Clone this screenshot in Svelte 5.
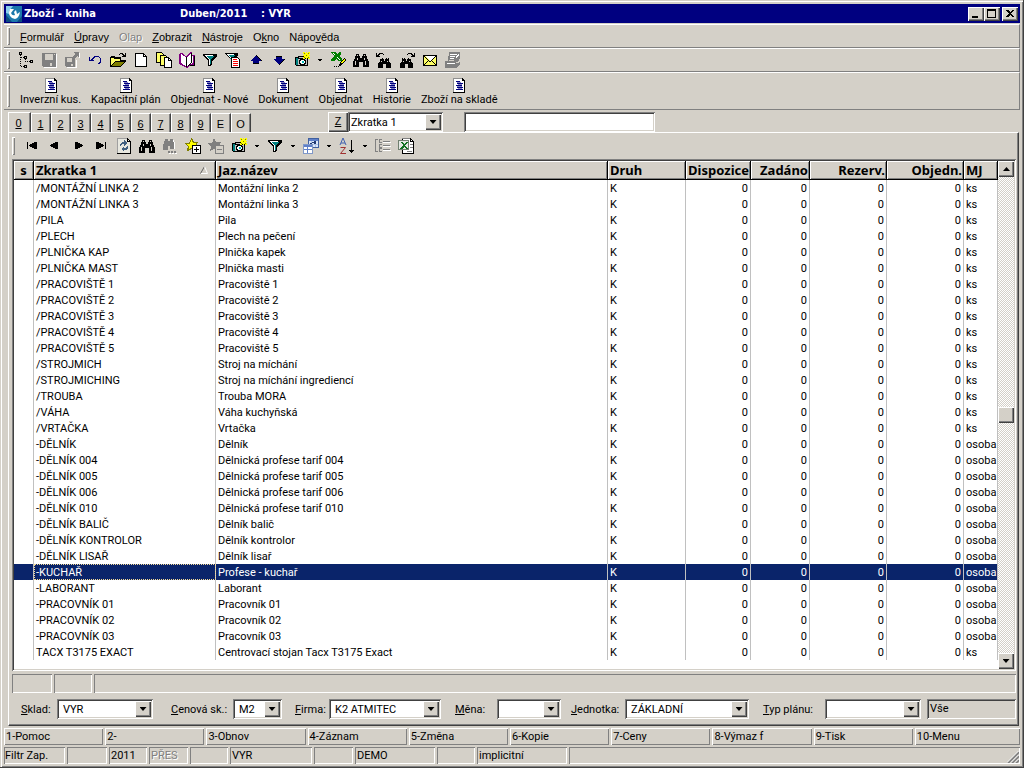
<script>
  const menu = [
    ["", "F", "ormulář"], ["", "Ú", "pravy"], ["Olap", "", ""], ["", "Z", "obrazit"],
    ["", "N", "ástroje"], ["O", "k", "no"], ["Nápo", "v", "ěda"],
  ];

  const mainTools = [
    "tree", "save", "saveAs", "undo", "open", "page", "copies", "book", "funnel", "funnelDoc",
    "up", "down", "camera", "caret", "sheet", "bino", "binoLeft", "binoRight", "mail", "note",
  ];

  const gridTools = [
    "first", "prev", "next", "last", "refresh", "bino", "binoOff", "starAdd", "starOff", "camera",
    "caret", "funnel", "caret", "tables", "caret", "sort", "caret", "listOff", "excel",
  ];

  const forms = ["Inverzní kus.", "Kapacitní plán", "Objednat - Nové", "Dokument", "Objednat", "Historie", "Zboží na skladě"];
  const tabs = ["0", "1", "2", "3", "4", "5", "6", "7", "8", "9", "E", "O"];

  let activeTab = $state("0");
  let selected = $state(24);

  const rows = [
    ["/MONTÁŽNÍ LINKA 2", "Montážní linka 2", "ks"],
    ["/MONTÁŽNÍ LINKA 3", "Montážní linka 3", "ks"],
    ["/PILA", "Pila", "ks"],
    ["/PLECH", "Plech na pečení", "ks"],
    ["/PLNIČKA KAP", "Plnička kapek", "ks"],
    ["/PLNIČKA MAST", "Plnička masti", "ks"],
    ["/PRACOVIŠTĚ 1", "Pracoviště 1", "ks"],
    ["/PRACOVIŠTĚ 2", "Pracoviště 2", "ks"],
    ["/PRACOVIŠTĚ 3", "Pracoviště 3", "ks"],
    ["/PRACOVIŠTĚ 4", "Pracoviště 4", "ks"],
    ["/PRACOVIŠTĚ 5", "Pracoviště 5", "ks"],
    ["/STROJMICH", "Stroj na míchání", "ks"],
    ["/STROJMICHING", "Stroj na míchání ingrediencí", "ks"],
    ["/TROUBA", "Trouba MORA", "ks"],
    ["/VÁHA", "Váha kuchyňská", "ks"],
    ["/VRTAČKA", "Vrtačka", "ks"],
    ["-DĚLNÍK", "Dělník", "osoba"],
    ["-DĚLNÍK 004", "Dělnická profese tarif 004", "osoba"],
    ["-DĚLNÍK 005", "Dělnická profese tarif 005", "osoba"],
    ["-DĚLNÍK 006", "Dělnická profese tarif 006", "osoba"],
    ["-DĚLNÍK 010", "Dělnická profese tarif 010", "osoba"],
    ["-DĚLNÍK BALIČ", "Dělník balič", "osoba"],
    ["-DĚLNÍK KONTROLOR", "Dělník kontrolor", "osoba"],
    ["-DĚLNÍK LISAŘ", "Dělník lisař", "osoba"],
    ["-KUCHAŘ", "Profese - kuchař", "osoba"],
    ["-LABORANT", "Laborant", "osoba"],
    ["-PRACOVNÍK 01", "Pracovník 01", "osoba"],
    ["-PRACOVNÍK 02", "Pracovník 02", "osoba"],
    ["-PRACOVNÍK 03", "Pracovník 03", "osoba"],
    ["TACX T3175 EXACT", "Centrovací stojan Tacx T3175 Exact", "ks"],
  ];

  // lead = space before the label, cap = label width, box = drop-down width
  const filters = [
    { id: "sklad", key: "S", rest: "klad:", value: "VYR", lead: 0, cap: 36, box: 96 },
    { id: "cena", key: "C", rest: "enová sk.:", value: "M2", lead: 18, cap: 62, box: 49 },
    { id: "firma", key: "F", rest: "irma:", value: "K2 ATMITEC", lead: 13, cap: 34, box: 112 },
    { id: "mena", key: "M", rest: "ěna:", value: "", lead: 14, cap: 42, box: 64 },
    { id: "jednotka", key: "J", rest: "ednotka:", value: "ZÁKLADNÍ", lead: 10, cap: 54, box: 124 },
    { id: "plan", key: "T", rest: "yp plánu:", value: "", lead: 14, cap: 62, box: 96 },
  ];

  const keys = ["1-Pomoc", "2-", "3-Obnov", "4-Záznam", "5-Změna", "6-Kopie", "7-Ceny", "8-Výmaz f", "9-Tisk", "10-Menu"];
  const status = ["Filtr Zap.", "", "2011", "PŘES", "", "VYR", "", "DEMO", "", "implicitní", ""];
</script>

{#snippet binoShape()}
  <path d="M3 2h3v2h1v2h2v-2h1v-2h3v2h1v3h1v2h1v6h-6v-5h-4v5h-6v-6h1v-2h1v-3h1z" />
  <path fill="#d4d0c8" d="M4 3h1v1h-1zM11 3h1v1h-1zM4 6h1v2h-1zM11 6h1v2h-1zM2 9h1v4h-1zM12 9h1v4h-1z" />
{/snippet}

{#snippet icon(name)}
  <svg class="icon" viewBox="0 0 16 16" width="16" height="16" shape-rendering="crispEdges" aria-hidden="true">
    {#if name === "tree"}
      <path fill="none" stroke="#000" d="M1.500 .5h2v2h-2zM6.500 4.500h2v2h-2zM12.500 8.500h2v2h-2zM6.500 13.500h2v2h-2z" />
      <path fill="none" stroke="#000" stroke-dasharray="1 1" d="M2.500 3v12M3 5.500h3M3 14.500h3M7.500 7v3M7 9.500h5" />
    {:else if name === "save"}
      <path fill="#808080" d="M1 1h14v14h-13l-1-1z" />
      <path fill="#d4d0c8" d="M4 2h8v6h-8zM9 11h2v3h-2zM13 2h1v1h-1z" />
      <path fill="#fff" d="M15 2h1v14h-13v-1h12z" />
    {:else if name === "saveAs"}
      <path fill="#808080" d="M1 5h10v10h-9l-1-1zM10 0h5v5h-1l-1-1-3 3-2-2 3-3z" />
      <path fill="#d4d0c8" d="M3 6h5v4h-5zM7 12h2v2h-2z" />
      <path fill="#fff" d="M12 8h1v8h-10v-1h9zM15 1h1v5h-1z" />
    {:else if name === "undo"}
      <path fill="#000080" d="M2 5h1v3l1-1 1-1 1-1 1-1h4l2 1 1 2v3l-2 2h-1v-1l2-2v-2l-1-1-1-1h-3l-3 3h2v1h-5v-5z" />
    {:else if name === "open"}
      <path fill="#000" d="M0 5h1v-1h4v1h6v3h5v1l-5 6h-11z" />
      <path fill="#ffff66" d="M1 6h3v1h6v2h-5l-4 4z" />
      <path fill="#808000" d="M5 10h9l-4 4h-9z" />
      <path fill="#000" d="M9 2h1v-1h3v1h1v1h1v-2h1v4h-4v-1h1v-1h-1v-1h-2v1h-1z" />
    {:else if name === "page"}
      <path fill="#fff" stroke="#000" d="M2.500 1.500h8l3 3v10h-11z" />
      <path fill="none" stroke="#000" d="M10.500 1.500v3h3" />
    {:else if name === "copies"}
      <path fill="#ffff66" stroke="#000" d="M.5 .5h5l2 2v8h-7z" />
      <path fill="#ffff66" stroke="#000" d="M4.500 3.500h5l2 2v8h-7z" />
      <path fill="#fff" stroke="#000" d="M8.500 5.500h4l3 3v7h-7z" />
      <path fill="none" stroke="#000" d="M12.500 5.500v3h3" />
    {:else if name === "book"}
      <path fill="#800080" d="M0 2h1v-1h2l4 3 5-4h1v3h3v11h-6l-1 2h-2l-1-1-6-3z" />
      <path fill="#fff" d="M2 2l5 3v9l-5-3zM8 5l4-4v9l-4 4zM13 4h1v7l-4 2 3-3z" />
      <path fill="#000" d="M7 5h1v10h-1zM12 1h1v10l-4 3v-1l3-3zM15 4h1v10h-5v-1h4z" />
    {:else if name === "funnel"}
      <path fill="#000" d="M1 2h14v2l-5 5v4l-2 1h-2v-5l-5-5z" />
      <path fill="#008080" d="M4 4h8l-3 4v4h-1v-4z" />
      <path fill="#fff" d="M3 3h8v1h-6l3 4v5h-1v-5l-4-4z" />
    {:else if name === "funnelDoc"}
      <path fill="#000" d="M0 1h13v2l-4 4v4h-3v-4l-6-5z" />
      <path fill="#008080" d="M3 3h7l-3 4v2z" />
      <path fill="#fff" d="M2 2h7v1h-5l3 4v3h-1v-3z" />
      <path fill="#fff" stroke="#000" d="M6.500 5.500h6l2 2v8h-8z" />
      <path fill="#f00" d="M8 7h4v1h-4zM8 9h5v1h-5zM8 11h5v1h-5zM8 13h5v1h-5z" />
    {:else if name === "up"}
      <path fill="#000080" d="M8 3l6 6h-3v3h-6v-3h-3z" /><path fill="#000" d="M5 11h6v1h-6zM8 3l6 6h-1l-5-5z" />
    {:else if name === "down"}
      <path fill="#000080" d="M8 13l-6-6h3v-3h6v3h3z" /><path fill="#000" d="M5 4h6v1h-6zM8 13l6-6h-1l-5 5z" />
    {:else if name === "camera"}
      <path fill="#000" d="M1 5h3v-1h8v1h2v9h-12l-1-1z" />
      <path fill="#008080" d="M2 6h2v7h-2z" />
      <path fill="#c0c0c0" d="M5 5h6v1h-6zM4 7h9v6h-9z" />
      <path fill="#000" d="M6 7h5v1h1v4h-1v1h-5v-1h-1v-4h1z" />
      <path fill="#fff" d="M7 8h3v1h1v2h-1v1h-3v-1h-1v-2h1z" />
      <path fill="#00c0c0" d="M8 9h2v2h-2z" />
      <path fill="#ffff00" d="M9 0h2v1h1v-1h1v1h1v-1h2v2h-1v1h1v1h-1v1h1v2h-2v-1h-1v1h-1v-1h-1v1h-2v-2h1v-1h-1v-1h1v-1h-1z" />
      <path fill="#808000" d="M12 3h1v1h-1zM10 1h1v1h-1zM14 1h1v1h-1zM10 5h1v1h-1zM14 5h1v1h-1z" />
    {:else if name === "caret"}
      <path fill="#000" d="M6 7h5v1h-1v1h-1v1h-1v-1h-1v-1h-1z" />
    {:else if name === "sheet"}
      <path fill="#008000" d="M0 0h5l2 2 2-2h2v2l-2 2 3 3v2h-4l-2-2-2 2h-3v-2l3-3-3-3z" />
      <path fill="#fff" d="M2 1h1l2 2v1zM7 5l3 3h-1l-3-3z" />
      <path fill="#000" d="M4 14h1v1h-1zM6 14h1v1h-1zM8 14h1v1h-1zM10 11l4-5 2 2-4 5-3 1z" />
      <path fill="#ffff00" d="M11 11l3-4 1 1-3 4z" />
    {:else if name === "bino"}
      {@render binoShape()}
    {:else if name === "binoLeft" || name === "binoRight"}
      <g transform={name === "binoLeft" ? "translate(16 0) scale(-1 1)" : ""}>
        <g transform="translate(1 4) scale(.8 .8)">{@render binoShape()}</g>
        <path fill="#000" d="M8 2h1v-1h4v1h1v1h1v-2h1v4h-4v-1h1v-1h-1v-1h-3v1h-1z" />
      </g>
    {:else if name === "binoOff"}
      <path fill="#808080" d="M3 1h3v2h2v-2h3v3h1v7h-4v-3h-2v4h-5v-6h1v-3h1z" />
      <path fill="#fff" d="M11 2h1v2h1v7h-1v-7h-1z" />
      <path fill="#808080" d="M6 13h2v2h-2zM9 13h2v2h-2zM12 13h2v2h-2z" />
      <path fill="#fff" d="M7 15h2v1h-2zM10 15h2v1h-2zM13 15h2v1h-2z" />
    {:else if name === "mail"}
      <path fill="#ffff66" stroke="#000" d="M1.500 3.500h13v10h-13z" />
      <path fill="#fff" d="M3 4h10l-5 5z" />
      <path fill="none" stroke="#000" d="M2 4l6 6 6-6M2 13l4-4M14 13l-4-4" />
    {:else if name === "note"}
      <path fill="#808080" d="M4 0h11v6l-2 4h2v3l-4 3h-11v-7h3z" />
      <path fill="#fff" d="M5 2h7v1h-7zM5 4h5v1h-5zM5 6h4v1h-4zM2 11h8v1h-8zM11 5l2-3 1 1-3 4z" />
      <path fill="#d4d0c8" d="M4 8h5v1h-5zM11 10h3v1h-3z" />
    {:else if name === "first"}
      <path fill="#000" d="M3 4h1v7h-1zM13 4v7h-2l-6-3v-1l6-3z" />
    {:else if name === "prev"}
      <path fill="#000" d="M11 4v7h-2l-6-3v-1l6-3z" />
    {:else if name === "next"}
      <path fill="#000" d="M5 4v7h2l6-3v-1l-6-3z" />
    {:else if name === "last"}
      <path fill="#000" d="M12 4h1v7h-1zM3 4v7h2l6-3v-1l-6-3z" />
    {:else if name === "refresh"}
      <path fill="#e8e8e0" stroke="#000" d="M1.500 .5h10l3 3v12h-13z" />
      <path fill="#a0a0a0" d="M1 0h10v1h-10zM1 1h1v14h-1z" />
      <path fill="none" stroke="#000" d="M11.500 1v2.500h3" />
      <path fill="#406080" d="M4 8v-2l2-2h2v-2l3 3-3 3v-2h-2l-1 2zM12 8v2l-2 2h-2v2l-3-3 3-3v2h2l1-2z" />
    {:else if name === "starAdd"}
      <path fill="#ffff00" stroke="#808000" d="M6.500 .5l2 4h4l-2 3 1 5-5-2-4 2 1-4-3-3h4z" />
      <path fill="#fff" stroke="#000" d="M7.500 7.500h8v8h-8z" />
      <path stroke="#000" d="M9 11.500h5M11.500 9v5" />
    {:else if name === "starOff"}
      <path fill="#808080" d="M6 0l2 4h5l-2 4v5l-5-2-4 2 1-4-3-4h4z" />
      <path fill="#d4d0c8" stroke="#808080" d="M7.500 7.500h8v8h-8z" />
      <path stroke="#808080" d="M9 11.500h5" />
    {:else if name === "tables"}
      <path fill="#dce8fa" stroke="#4060a0" d="M5.500 .5h10v9h-10z" />
      <path fill="#6080c8" d="M6 1h9v2h-9z" />
      <path fill="#b0c4e8" d="M8 3h1v6h-1zM12 3h1v6h-1zM6 6h9v1h-9z" />
      <path fill="#fff" stroke="#8098c8" d="M.5 6.500h9v9h-9z" />
      <path fill="#6080c8" d="M1 7h8v2h-8zM4 9h1v6h-1zM1 11h8v1h-8z" />
      <path fill="#203870" d="M6 5h3v-1h2v-1h2v3h-2v-1h-2v1h-2z" />
    {:else if name === "sort"}
      <path fill="none" stroke="#4060b0" shape-rendering="auto" d="M1 7l3-7 3 7M2 5h4" />
      <path fill="none" stroke="#a03030" shape-rendering="auto" d="M1.500 9.500h5l-5 6h5.500" />
      <path fill="#000" d="M12 2h1v10h2l-2 3h-1l-2-3h2z" />
    {:else if name === "listOff"}
      <path fill="none" stroke="#808080" d="M3 1.500h-2.500v12h2.500M6.500 1.500h-2v3h2M6.500 6.500h-2v3h2M6.500 10.500h-2v3h2M8 3.500h7M8 7.500h7M8 11.500h7" />
      <path stroke="#fff" d="M8 4.500h8M8 8.500h8M8 12.500h8" />
    {:else if name === "excel"}
      <path fill="#fff" stroke="#000" d="M4.500 .5h8l3 3v12h-11z" />
      <path fill="#808080" d="M4 0h8v1h-8z" />
      <path fill="none" stroke="#000" d="M12.500 1v2.500h3" />
      <path fill="#e4e8e4" stroke="#708070" d="M.5 2.500h10v9h-10z" />
      <path fill="#107020" d="M2 4h2l2 2 2-2h2l-3 3 3 4h-2l-2-2-2 2h-2l3-4z" />
      <path stroke="#808080" d="M9 13.500h5M12 9.500h3M12 6.500h3" />
    {:else if name === "form"}
      <path fill="#fff" d="M2 1h9l3 3v11h-12z" />
      <path fill="none" stroke="#909090" d="M2.500 15v-13.500h9" />
      <path fill="#000" d="M13 4h1v12h-12v-1h11zM11 1h1v1h1v1h1v1h-3z" />
      <path fill="#000080" d="M5 4h4v1h-4zM6 6h6v1h-6zM5 8h6v1h-6zM6 10h6v1h-6zM5 12h7v1h-7z" />
      <path fill="#8080c0" d="M6 5h4v1h-4zM7 7h4v1h-4zM6 9h5v1h-5zM7 11h4v1h-4z" />
    {/if}
  </svg>
{/snippet}

<div class="window">
  <header class="title-bar">
    <svg class="logo" viewBox="0 0 16 16" width="16" height="16" aria-hidden="true">
      <rect width="16" height="16" fill="#1c78ac" />
      <path fill="#0c4c80" d="M0 9l6 7h-6zM11 16l5-6v6z" />
      <path fill="#8cd0ec" d="M0 0h7L3 5v3L0 7z" />
      <path fill="#fff" d="M4 3Q2 7 4 10Q6 13 9 13Q13 12 14 6L11 8L10 4L8 6L9 9Q6 10 5 7L8 3L6 3Z" />
    </svg>
    <h1>Zboží - kniha</h1>
    <span class="period">Duben/2011</span>
    <span class="book">: VYR</span>
    <div class="window-buttons">
      <button aria-label="Minimalizovat">
        <svg viewBox="0 0 12 10" width="12" height="10"><path fill="#000" d="M2 7h6v2h-6z" /></svg>
      </button>
      <button aria-label="Maximalizovat">
        <svg viewBox="0 0 12 10" width="12" height="10"><path fill="#000" d="M1 0h9v9h-9zM2 2v6h7v-6z" fill-rule="evenodd" /></svg>
      </button>
      <button class="close" aria-label="Zavřít">
        <svg viewBox="0 0 12 10" width="12" height="10" shape-rendering="crispEdges"><path fill="#000" d="M2 1h2l2 2 2-2h2l-3 3.500 3 3.500h-2l-2-2-2 2h-2l3-3.500z" /></svg>
      </button>
    </div>
  </header>

  <nav class="band menu">
    <span class="grip"></span>
    {#each menu as [before, key, after]}
      <button disabled={!key}>{before}<u>{key}</u>{after}</button>
    {/each}
  </nav>

  <div class="band tools">
    <span class="grip"></span>
    {#each mainTools as name}
      <button class:narrow={name === "caret"} aria-label={name}>{@render icon(name)}</button>
    {/each}
  </div>

  <div class="band forms">
    <span class="grip"></span>
    {#each forms as name}
      <button>{@render icon("form")}{name}</button>
    {/each}
  </div>

  <main>
    <div class="tab-row">
      {#each tabs as tab}
        <button class="tab" class:active={tab === activeTab} onclick={() => (activeTab = tab)}>
          {#if tab === "E" || tab === "O"}{tab}{:else}<u>{tab}</u>{/if}
        </button>
      {/each}
      <button class="order"><u>Z</u></button>
      <span class="combo order-by">
        <select aria-label="Řazení"><option>Zkratka 1</option></select>
        <span class="drop"></span>
      </span>
      <input class="search" type="text" aria-label="Hledat" />
    </div>

    <section class="page">
      <div class="tools">
        <span class="grip"></span>
        {#each gridTools as name}
          <button class:narrow={name === "caret"} aria-label={name}>{@render icon(name)}</button>
        {/each}
      </div>

      <div class="grid">
        <table>
          <colgroup>
            <col class="c-mark" /><col class="c-code" /><col /><col class="c-kind" /><col class="c-disp" />
            <col class="c-zad" /><col class="c-rez" /><col class="c-obj" /><col class="c-unit" />
          </colgroup>
          <thead>
            <tr>
              <th class="mark">s</th>
              <th>
                <span class="sorted">Zkratka 1
                  <svg viewBox="0 0 8 8" width="8" height="8"><path fill="none" stroke="#606060" d="M.5 7.500L4.500 .5" /><path fill="none" stroke="#fff" d="M4.500 .5L7.500 7.500H1" /></svg>
                </span>
              </th>
              <th>Jaz.název</th>
              <th>Druh</th>
              <th class="num">Dispozice</th>
              <th class="num">Zadáno</th>
              <th class="num">Rezerv.</th>
              <th class="num">Objedn.</th>
              <th>MJ</th>
            </tr>
          </thead>
          <tbody>
            {#each rows as [code, title, unit], i}
              <tr class:selected={i === selected} onclick={() => (selected = i)}>
                <td></td>
                <td class="code">{code}</td>
                <td>{title}</td>
                <td>K</td>
                <td class="num">0</td>
                <td class="num">0</td>
                <td class="num">0</td>
                <td class="num">0</td>
                <td>{unit}</td>
              </tr>
            {/each}
          </tbody>
        </table>
        <div class="scrollbar">
          <button class="arrow up" aria-label="Nahoru"></button>
          <span class="thumb"></span>
          <button class="arrow" aria-label="Dolů"></button>
        </div>
      </div>

      <div class="totals"><span></span><span></span><span></span></div>

      <div class="filters">
        {#each filters as f}
          <label for={f.id} style="margin-left: {f.lead}px; width: {f.cap}px"><u>{f.key}</u>{f.rest}</label>
          <span class="combo" style="width: {f.box}px">
            <select id={f.id}><option>{f.value}</option></select>
            <span class="drop"></span>
          </span>
        {/each}
        <span class="all">Vše</span>
      </div>
    </section>
  </main>

  <div class="keys">
    {#each keys as key}
      <button>{key}</button>
    {/each}
  </div>

  <footer class="status">
    {#each status as cell}
      <span class:off={cell === "PŘES"}>{cell}</span>
    {/each}
    <svg class="sizer" viewBox="0 0 12 12" width="12" height="12" aria-hidden="true">
      <path stroke="#808080" stroke-width="2" d="M1 12L12 1M5 12l7-7M9 12l3-3" />
      <path stroke="#fff" d="M0 11.500L11.500 0M4 11.500l7.500-7.500M8 11.500l3.500-3.500" />
    </svg>
  </footer>
</div>

<style>
  :global(body) {
    background: #d4d0c8;
  }

  .window {
    --ui: Roboto, Tahoma, sans-serif;
    --face: #d4d0c8;
    --raised: inset 1px 1px #fff, inset -1px -1px #404040, inset -2px -2px #808080;
    --sunken: inset 1px 1px #808080, inset -1px -1px #fff, inset 2px 2px #404040, inset -2px -2px #d4d0c8;
    box-sizing: border-box;
    min-height: 100vh;
    display: flex;
    flex-direction: column;
    padding: 4px;
    background: var(--face);
    box-shadow: inset -1px -1px #404040, inset 1px 1px #d4d0c8, inset 2px 2px #fff, inset -2px -2px #808080;
    font: 11px/14px var(--ui);
    color: #000;
    white-space: nowrap;
  }

  button, select, input {
    box-sizing: border-box;
    margin: 0;
    padding: 0;
    border: 0;
    border-radius: 0;
    background: none;
    color: inherit;
    font: inherit;
  }

  .icon {
    display: block;
  }

  .title-bar {
    display: flex;
    align-items: center;
    height: 19px;
    padding: 0 2px;
    background: #000080;
    color: #fff;
    font-family: "DejaVu Sans Condensed", "DejaVu Sans", sans-serif;
    font-weight: bold;
  }

  h1 {
    width: 156px;
    margin: 0 0 0 2px;
    font-size: 11px;
  }

  .period {
    width: 81px;
  }

  .window-buttons {
    display: flex;
    margin-left: auto;
  }

  .window-buttons button {
    width: 16px;
    height: 14px;
    padding: 2px;
    background: var(--face);
    box-shadow: var(--raised);
  }

  .window-buttons svg {
    display: block;
  }

  .window-buttons .close {
    margin-left: 2px;
  }

  .band {
    display: flex;
    align-items: center;
    box-sizing: border-box;
    border-top: 1px solid #fff;
    border-bottom: 1px solid #808080;
    border-right: 1px solid #808080;
  }

  .grip {
    align-self: stretch;
    width: 3px;
    margin: 2px 4px 2px 3px;
    box-shadow: inset 1px 1px #fff, inset -1px -1px #808080;
  }

  .menu {
    height: 24px;
    margin-top: 1px;
    font-family: "Liberation Sans", Arial, sans-serif;
  }

  .menu .grip {
    margin-right: 10px;
  }

  .menu button {
    margin-right: 10px;
    padding-top: 2px;
  }

  .menu button:disabled {
    color: #808080;
    text-shadow: 1px 1px #fff;
  }

  .tools {
    display: flex;
    align-items: center;
    height: 24px;
  }

  .tools button {
    display: flex;
    justify-content: center;
    width: 23px;
  }

  .tools .narrow {
    width: 13px;
  }

  .forms {
    height: 38px;
  }

  .forms .grip {
    margin-right: 10px;
  }

  .forms button {
    display: flex;
    flex-direction: column;
    align-items: center;
    margin-right: 10px;
    padding-top: 2px;
  }

  main {
    flex: 1;
    display: flex;
    flex-direction: column;
    padding: 2px 1px 0 4px;
  }

  .tab-row {
    display: flex;
    height: 20px;
  }

  .tab {
    width: 20px;
    margin-top: 1px;
    border-top: 1px solid #fff;
    border-right: 1px solid #404040;
    box-shadow: inset 1px 0 #fff, inset -1px 0 #808080;
    font-family: "Liberation Sans", Arial, sans-serif;
    padding-top: 2px;
  }

  .tab.active {
    width: 23px;
    margin-top: 0;
    padding: 0 1px 0 0;
  }

  .order {
    width: 20px;
    margin-left: 77px;
    background: var(--face);
    box-shadow: var(--raised);
  }

  .combo {
    position: relative;
    display: flex;
    box-sizing: border-box;
    height: 20px;
    padding: 2px;
    background: #fff;
    box-shadow: var(--sunken);
  }

  .combo select {
    flex: 1;
    min-width: 0;
    appearance: none;
    padding: 1px 16px 0 4px;
    outline: none;
  }

  .order-by select {
    padding-left: 1px;
  }

  .drop {
    position: absolute;
    top: 2px;
    right: 2px;
    bottom: 2px;
    width: 16px;
    display: grid;
    place-items: center;
    background: var(--face);
    box-shadow: var(--raised);
    pointer-events: none;
  }

  .drop::before, .arrow::before {
    content: "";
    width: 7px;
    height: 4px;
    background: #000;
    clip-path: polygon(0 0, 100% 0, 50% 100%);
  }

  .order-by {
    width: 95px;
  }

  .search {
    width: 191px;
    margin-left: 21px;
    padding: 0 4px;
    background: #fff;
    box-shadow: var(--sunken);
  }

  .page {
    flex: 1;
    display: flex;
    flex-direction: column;
    border-top: 1px solid #fff;
    border-left: 1px solid #fff;
    border-right: 1px solid #404040;
    border-bottom: 1px solid #404040;
    box-shadow: inset -1px -1px #808080;
    padding: 0 2px 0 3px;
  }

  .page .tools {
    height: 26px;
  }

  .page .tools .grip {
    margin: 4px 5px 4px 0;
  }

  .grid {
    flex: 1;
    display: flex;
    align-items: flex-start;
    padding: 2px;
    background: #fff;
    box-shadow: var(--sunken);
  }

  table {
    flex: 1;
    width: 0;
    table-layout: fixed;
    border-collapse: separate;
    border-spacing: 0;
  }

  .c-mark { width: 20px; }
  .c-code { width: 182px; }
  .c-kind { width: 78px; }
  .c-disp { width: 65px; }
  .c-zad { width: 59px; }
  .c-rez { width: 77px; }
  .c-obj { width: 77px; }
  .c-unit { width: 34px; }

  th {
    height: 18px;
    padding: 0 2px;
    border-bottom: 1px solid #000;
    border-right: 1px solid #000;
    background: var(--face);
    box-shadow: inset 1px 1px #fff, inset -1px -1px #808080;
    font-family: "Noto Sans", Tahoma, sans-serif;
    font-size: 13px;
    line-height: 16px;
    text-align: left;
  }

  .mark {
    text-align: center;
  }

  .sorted {
    display: flex;
    align-items: center;
    justify-content: space-between;
    padding-right: 5px;
  }

  td {
    height: 14px;
    padding: 2px 2px 0;
    border-right: 1px solid #c0c0c0;
    line-height: 14px;
    overflow: hidden;
  }

  th.num {
    text-align: right;
    padding: 0 1px 0 0;
  }

  td.num {
    text-align: right;
  }

  .selected td {
    background: #0a246a;
    color: #fff;
  }

  .selected .code {
    outline: 1px dotted #f5db95;
    outline-offset: -1px;
  }

  .scrollbar {
    align-self: stretch;
    display: flex;
    flex-direction: column;
    justify-content: space-between;
    width: 16px;
    background: repeating-conic-gradient(#fff 0 25%, #d4d0c8 0 50%) 0 0 / 2px 2px;
  }

  .arrow, .thumb {
    display: grid;
    place-items: center;
    height: 16px;
    background: var(--face);
    box-shadow: var(--raised);
  }

  .up::before {
    transform: rotate(180deg);
  }

  .totals {
    display: flex;
    gap: 2px;
    height: 19px;
    margin-top: 3px;
  }

  .totals span, .status span {
    box-shadow: inset 1px 1px #808080, inset -1px -1px #fff;
  }

  .totals span:nth-child(1) { width: 40px; }
  .totals span:nth-child(2) { width: 38px; }
  .totals span:nth-child(3) { flex: 1; }

  .filters {
    display: flex;
    align-items: center;
    height: 32px;
    padding-left: 9px;
  }

  .filters label {
    padding-top: 1px;
  }

  .all {
    flex: 1;
    margin-left: 6px;
    height: 20px;
    padding-left: 3px;
    box-shadow: var(--sunken);
    line-height: 20px;
  }

  .keys {
    display: flex;
    gap: 2px;
    margin-top: 2px;
  }

  .keys button {
    flex: 33;
    height: 17px;
    padding: 1px 0 0 2px;
    box-shadow: inset 1px 1px #fff, inset -1px -1px #808080;
    text-align: left;
  }

  .keys button:last-child {
    flex: 35;
  }

  .status {
    position: relative;
    display: flex;
    gap: 2px;
    margin-top: 2px;
    height: 17px;
    line-height: 18px;
  }

  .status span {
    box-sizing: border-box;
    width: 38px;
    padding-left: 2px;
  }

  .status span:nth-child(1) { width: 61px; padding-left: 1px; }
  .status span:nth-child(2) { width: 40px; }
  .status span:nth-child(4) { width: 39px; }
  .status span:nth-child(6) { width: 82px; }
  .status span:nth-child(7) { width: 39px; }
  .status span:nth-child(8) { width: 80px; }
  .status span:nth-child(10) { width: 90px; }
  .status span:nth-child(11) { flex: 1; }

  .status .off {
    color: #808080;
    text-shadow: 1px 1px #fff;
  }

  .sizer {
    position: absolute;
    right: 1px;
    bottom: 1px;
  }
</style>
